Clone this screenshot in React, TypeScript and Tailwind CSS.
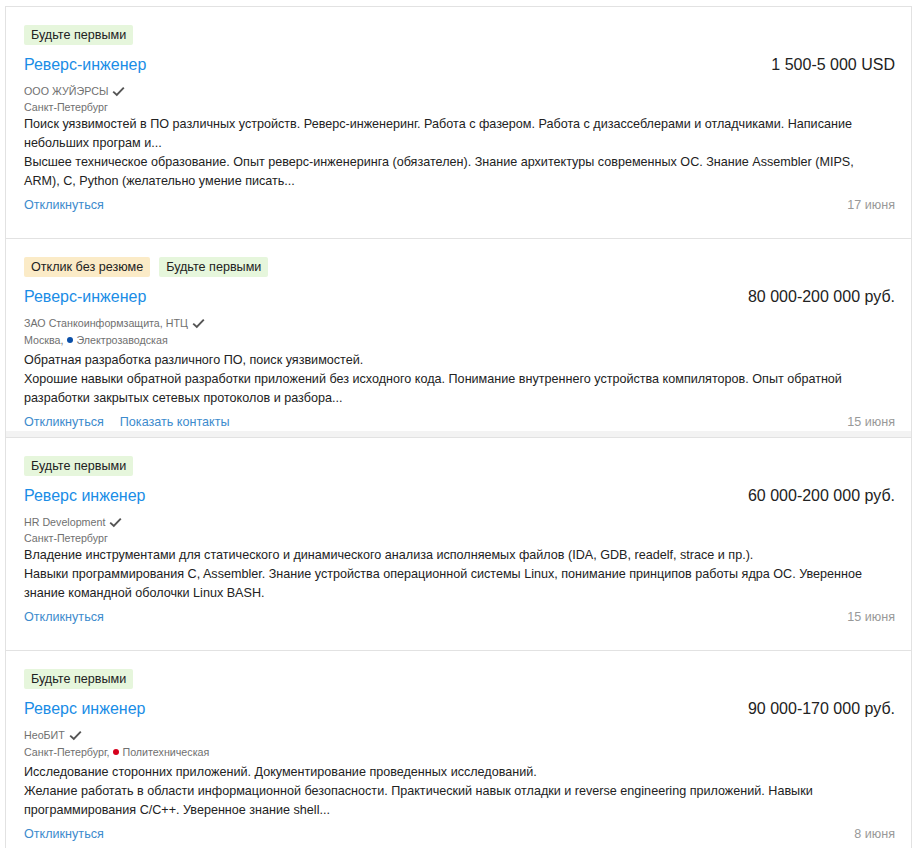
import React from "react";

type Job = {
  badges: { text: string; tone: "green" | "orange" }[];
  title: string;
  salary: string;
  company: string;
  city: string;
  metro?: { name: string; color: string };
  text: string[];
  contacts?: boolean;
  date: string;
  band?: boolean;
};

const jobs: Job[] = [
  {
    badges: [{ text: "Будьте первыми", tone: "green" }],
    title: "Реверс-инженер",
    salary: "1 500-5 000 USD",
    company: "ООО ЖУЙЭРСЫ",
    city: "Санкт-Петербург",
    text: [
      "Поиск уязвимостей в ПО различных устройств. Реверс-инженеринг. Работа с фазером. Работа с дизассеблерами и отладчиками. Написание небольших програм и...",
      "Высшее техническое образование. Опыт реверс-инженеринга (обязателен). Знание архитектуры современных ОС. Знание Assembler (MIPS, ARM), C, Python (желательно умение писать...",
    ],
    date: "17 июня",
  },
  {
    badges: [
      { text: "Отклик без резюме", tone: "orange" },
      { text: "Будьте первыми", tone: "green" },
    ],
    title: "Реверс-инженер",
    salary: "80 000-200 000 руб.",
    company: "ЗАО Станкоинформзащита, НТЦ",
    city: "Москва,",
    metro: { name: "Электрозаводская", color: "#0a4fa8" },
    text: [
      "Обратная разработка различного ПО, поиск уязвимостей.",
      "Хорошие навыки обратной разработки приложений без исходного кода. Понимание внутреннего устройства компиляторов. Опыт обратной разработки закрытых сетевых протоколов и разбора...",
    ],
    contacts: true,
    date: "15 июня",
    band: true,
  },
  {
    badges: [{ text: "Будьте первыми", tone: "green" }],
    title: "Реверс инженер",
    salary: "60 000-200 000 руб.",
    company: "HR Development",
    city: "Санкт-Петербург",
    text: [
      "Владение инструментами для статического и динамического анализа исполняемых файлов (IDA, GDB, readelf, strace и пр.).",
      "Навыки программирования C, Assembler. Знание устройства операционной системы Linux, понимание принципов работы ядра ОС. Уверенное знание командной оболочки Linux BASH.",
    ],
    date: "15 июня",
  },
  {
    badges: [{ text: "Будьте первыми", tone: "green" }],
    title: "Реверс инженер",
    salary: "90 000-170 000 руб.",
    company: "НеоБИТ",
    city: "Санкт-Петербург,",
    metro: { name: "Политехническая", color: "#d6001c" },
    text: [
      "Исследование сторонних приложений. Документирование проведенных исследований.",
      "Желание работать в области информационной безопасности. Практический навык отладки и reverse engineering приложений. Навыки программирования C/C++. Уверенное знание shell...",
    ],
    date: "8 июня",
  },
];

function Check() {
  return (
    <svg width="13" height="11" viewBox="0 0 13 11" className="ml-[4px] inline-block">
      <path d="M1.2 5.6 L4.8 9 L11.8 1.6" fill="none" stroke="#555" strokeWidth="1.9" />
    </svg>
  );
}

function Card({ job, last }: { job: Job; last: boolean }) {
  return (
    <div className={last ? "" : "border-b border-[#e2e2e2]"}>
      <div className={job.band ? "pl-[18px] pr-[16px] pt-[18px] pb-[0px]" : "pl-[18px] pr-[16px] pt-[18px] pb-[24px]"}>
        <div className="flex gap-[9px]">
          {job.badges.map((b) => (
            <span
              key={b.text}
              className={
                (b.tone === "green" ? "bg-[#e6f6dc]" : "bg-[#fbebc7]") +
                " h-[20px] rounded-[2px] px-[7px] text-[12.6px] leading-[20px] text-[#222]"
              }
            >
              {b.text}
            </span>
          ))}
        </div>
        <div className="mt-[8px] flex items-center justify-between">
          <span className="text-[16px] leading-[24px] text-[#1a8de6]">{job.title}</span>
          <span className="text-[16px] leading-[24px] text-[#222]">{job.salary}</span>
        </div>
        <div className="mt-[6px] flex items-center text-[10.7px] leading-[16px] text-[#707070]">
          {job.company}
          <Check />
        </div>
        <div className={(job.metro ? "mt-[2px]" : "mt-[1px]") + " flex items-center text-[10.7px] leading-[14px] text-[#707070]"}>
          {job.city}
          {job.metro && (
            <>
              <span
                className="ml-[4px] mr-[3px] inline-block h-[6px] w-[6px] rounded-full"
                style={{ backgroundColor: job.metro.color }}
              />
              {job.metro.name}
            </>
          )}
        </div>
        <div className={(job.metro ? "mt-[4px]" : "mt-[1px]") + " w-[868px] text-[12.6px] leading-[19px] text-[#222]"}>
          {job.text.map((t, i) => (
            <div key={i}>{t}</div>
          ))}
        </div>
        <div className="mt-[5px] flex items-center justify-between text-[12.6px] leading-[18px]">
          <div className="flex gap-[16px] text-[#3d8bcd]">
            <span>Откликнуться</span>
            {job.contacts && <span>Показать контакты</span>}
          </div>
          <span className="text-[#999]">{job.date}</span>
        </div>
      </div>
      {job.band && <div className="h-[6px] bg-[#f3f3f3]" />}
    </div>
  );
}

export default function App() {
  return (
    <div
      className="min-h-[848px] bg-white pl-[5px] pt-[6px]"
      style={{ fontFamily: '"Liberation Sans", Arial, sans-serif' }}
    >
      <div className="w-[907px] border-l border-r border-t border-[#e2e2e2]">
        {jobs.map((j, i) => (
          <Card key={i} job={j} last={i === jobs.length - 1} />
        ))}
      </div>
    </div>
  );
}
